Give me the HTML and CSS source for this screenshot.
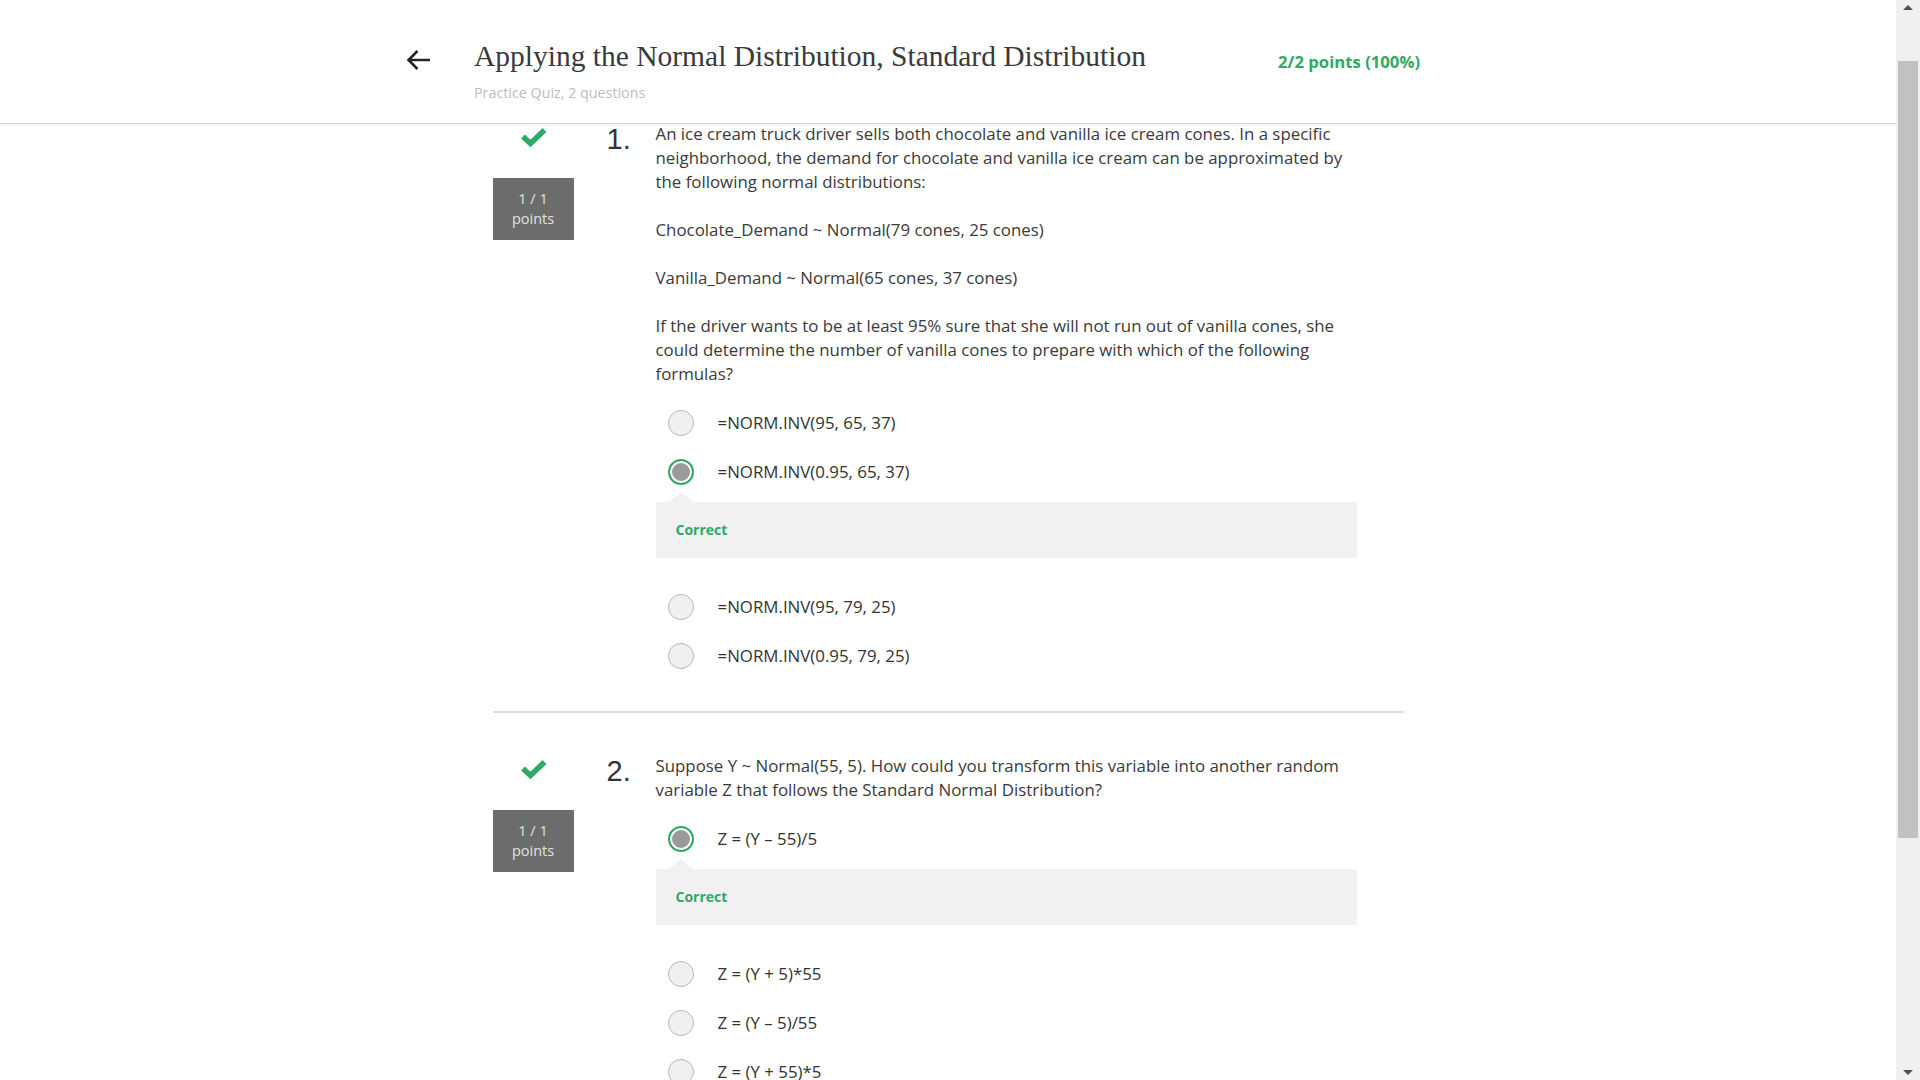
FILE: index.html
```html
<!DOCTYPE html>
<html lang="en">
<head>
<meta charset="utf-8">
<title>Applying the Normal Distribution, Standard Distribution</title>
<link rel="stylesheet" href="styles.css">
</head>
<body>
<div class="window">
  <div class="page">
    <header class="topbar">
      <div class="topbar-inner">
        <a class="back" href="#" aria-label="Back">
          <svg width="25" height="22" viewBox="0 0 25 22"><path d="M24 11H2.5M11.5 2L2.5 11l9 9" fill="none" stroke="#262626" stroke-width="2.6" stroke-linecap="butt" stroke-linejoin="miter"/></svg>
        </a>
        <div class="title-block">
          <h1 class="title">Applying the Normal Distribution, Standard Distribution</h1>
          <div class="subtitle">Practice Quiz, 2 questions</div>
        </div>
        <div class="score">2/2 points (100%)</div>
      </div>
    </header>

    <main class="content">
      <section class="question q1">
        <div class="q-side">
          <svg class="check" width="27" height="20" viewBox="0 0 27 20"><path d="M3 9.5l7.5 7L24.5 3" fill="none" stroke="#2fa968" stroke-width="5.5" stroke-linecap="butt" stroke-linejoin="miter"/></svg>
          <div class="points">1 / 1<br>points</div>
        </div>
        <div class="q-num">1.</div>
        <div class="q-body">
          <p>An ice cream truck driver sells both chocolate and vanilla ice cream cones. In a specific neighborhood, the demand for chocolate and vanilla ice cream can be approximated by the following normal distributions:</p>
          <p>Chocolate_Demand ~ Normal(79 cones, 25 cones)</p>
          <p>Vanilla_Demand ~ Normal(65 cones, 37 cones)</p>
          <p>If the driver wants to be at least 95% sure that she will not run out of vanilla cones, she could determine the number of vanilla cones to prepare with which of the following formulas?</p>
          <div class="options">
            <div class="option"><span class="radio"></span><span class="opt-text">=NORM.INV(95, 65, 37)</span></div>
            <div class="option"><span class="radio selected"></span><span class="opt-text">=NORM.INV(0.95, 65, 37)</span></div>
            <div class="feedback"><span class="correct">Correct</span></div>
            <div class="option after-feedback"><span class="radio"></span><span class="opt-text">=NORM.INV(95, 79, 25)</span></div>
            <div class="option"><span class="radio"></span><span class="opt-text">=NORM.INV(0.95, 79, 25)</span></div>
          </div>
        </div>
      </section>

      <hr class="divider">

      <section class="question q2">
        <div class="q-side">
          <svg class="check" width="27" height="20" viewBox="0 0 27 20"><path d="M3 9.5l7.5 7L24.5 3" fill="none" stroke="#2fa968" stroke-width="5.5" stroke-linecap="butt" stroke-linejoin="miter"/></svg>
          <div class="points">1 / 1<br>points</div>
        </div>
        <div class="q-num">2.</div>
        <div class="q-body">
          <p>Suppose Y ~ Normal(55, 5). How could you transform this variable into another random variable Z that follows the Standard Normal Distribution?</p>
          <div class="options">
            <div class="option"><span class="radio selected"></span><span class="opt-text">Z = (Y – 55)/5</span></div>
            <div class="feedback"><span class="correct">Correct</span></div>
            <div class="option after-feedback"><span class="radio"></span><span class="opt-text">Z = (Y + 5)*55</span></div>
            <div class="option"><span class="radio"></span><span class="opt-text">Z = (Y – 5)/55</span></div>
            <div class="option"><span class="radio"></span><span class="opt-text">Z = (Y + 55)*5</span></div>
          </div>
        </div>
      </section>
    </main>
  </div>

  <div class="scrollbar">
    <span class="sb-arrow up"></span>
    <div class="sb-track"><div class="sb-thumb"></div></div>
    <span class="sb-arrow down"></span>
  </div>
</div>
</body>
</html>
```

FILE: styles.css
```css
* { box-sizing: border-box; }

html, body {
  margin: 0;
  padding: 0;
  height: 100%;
  overflow: hidden;
  background: #ffffff;
}

body {
  font-family: "Open Sans", "Liberation Sans", sans-serif;
  color: #333333;
}

.window {
  display: flex;
  width: 1920px;
  height: 1080px;
}

.page {
  flex: 1;
  min-width: 0;
  overflow: hidden;
  display: flex;
  flex-direction: column;
}

/* ---------- header ---------- */
.topbar {
  position: relative;
  z-index: 2;
  flex: none;
  height: 124px;
  border-bottom: 1px solid #d4d4d4;
  box-shadow: 0 1px 2px rgba(0, 0, 0, 0.06);
  background: #fff;
}

.topbar-inner {
  display: flex;
  align-items: flex-start;
  padding-left: 406px;
  padding-top: 38px;
}

.back {
  display: block;
  width: 25px;
  height: 22px;
  margin-top: 11px;
}
.back svg { display: block; }

.title-block {
  margin-left: 43px;
  width: 804px;
}

.title {
  margin: 0;
  font-family: "Liberation Serif", "Times New Roman", serif;
  font-weight: normal;
  font-size: 29.5px;
  line-height: 36px;
  color: #3a3a3a;
}

.subtitle {
  margin-top: 9px;
  font-size: 14.3px;
  line-height: 20px;
  color: #bdbdbd;
}

.score {
  margin-top: 13px;
  font-size: 16.7px;
  line-height: 22px;
  font-weight: 700;
  color: #2fa968;
}

/* ---------- content ---------- */
.content {
  width: 911px;
  margin: -2px auto 0;
}

.question {
  display: flex;
  align-items: flex-start;
}

.q1 { margin-bottom: 42px; }
.q2 { margin-top: 41px; }

.q-side {
  width: 81px;
  flex: none;
  display: flex;
  flex-direction: column;
  align-items: center;
}

.check {
  display: block;
  margin-top: 5px;
}

.points {
  margin-top: 31px;
  width: 81px;
  background: #6c6c6c;
  color: #e2e2e2;
  font-size: 14.5px;
  line-height: 20px;
  text-align: center;
  padding: 11px 0 11px;
}

.q-num {
  flex: none;
  width: 49px;
  margin-left: 33px;
  font-family: "Liberation Sans", Arial, sans-serif;
  font-size: 29px;
  line-height: 34px;
  color: #333333;
}

.q-body {
  width: 701px;
  flex: none;
  font-size: 16.85px;
  line-height: 24px;
  color: #3a3a3a;
}

.q-body p {
  margin: 0 0 24px;
}
.q-body p:last-of-type { margin-bottom: 0; }

.options {
  margin-top: 24px;
  display: flex;
  flex-direction: column;
}

.option {
  display: flex;
  align-items: center;
  height: 26px;
  padding-left: 12px;
  margin-bottom: 23px;
  font-size: 16.85px;
  color: #333333;
}
.option:last-child { margin-bottom: 0; }

.option.after-feedback { margin-top: 36px; }

.radio {
  flex: none;
  width: 26px;
  height: 26px;
  border-radius: 50%;
  border: 1px solid #b8b8b8;
  background: #f0f0f0;
  margin-right: 24px;
}

.radio.selected {
  border: 2px solid #2fa968;
  background: #9a9a9a;
  box-shadow: inset 0 0 0 2px #ffffff;
}

.feedback {
  position: relative;
  margin-top: -6px;
  height: 56px;
  background: #f1f1f1;
  display: flex;
  align-items: center;
  padding-left: 20px;
}

.feedback::before {
  content: "";
  position: absolute;
  left: 13px;
  top: -10px;
  border-left: 12px solid transparent;
  border-right: 12px solid transparent;
  border-bottom: 10px solid #f1f1f1;
}

.correct {
  font-size: 14px;
  font-weight: 700;
  color: #2fa968;
}

.divider {
  margin: 0;
  border: 0;
  height: 2px;
  background: #dedede;
}

/* ---------- fake scrollbar ---------- */
.scrollbar {
  flex: none;
  width: 24px;
  height: 1080px;
  background: #f0f0f0;
  display: flex;
  flex-direction: column;
  align-items: center;
}

.sb-arrow {
  flex: none;
  width: 0;
  height: 0;
  border-left: 5px solid transparent;
  border-right: 5px solid transparent;
}
.sb-arrow.up {
  margin-top: 5px;
  border-bottom: 5px solid #505050;
}
.sb-arrow.down {
  margin-bottom: 5px;
  border-top: 5px solid #505050;
}

.sb-track {
  flex: 1;
  width: 100%;
  padding: 51px 2px 0;
}

.sb-thumb {
  width: 100%;
  height: 777px;
  background: #c1c1c1;
}
```
